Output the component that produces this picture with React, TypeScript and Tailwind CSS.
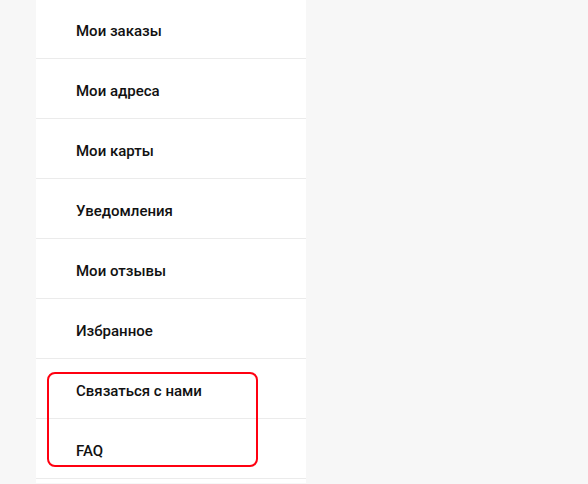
const ITEMS = [
  "Мои заказы",
  "Мои адреса",
  "Мои карты",
  "Уведомления",
  "Мои отзывы",
  "Избранное",
  "Связаться с нами",
  "FAQ",
];

export default function App() {
  return (
    <div className="h-[484px] w-[588px] overflow-hidden bg-[#f7f7f7] font-['Roboto',sans-serif]">
      <div className="relative ml-9 h-full w-[270px] bg-white">
        <ul className="-mt-px">
          {ITEMS.map((item) => (
            <li
              key={item}
              className="flex h-[60px] items-center border-b border-[#ebebeb] pl-10 pt-[5px] text-[15px] font-medium text-[#111]"
            >
              {item}
            </li>
          ))}
        </ul>
        <div className="absolute left-[11px] top-[373px] h-[95px] w-[211px] rounded-lg border-2 border-[#ff0010]" />
      </div>
    </div>
  );
}
